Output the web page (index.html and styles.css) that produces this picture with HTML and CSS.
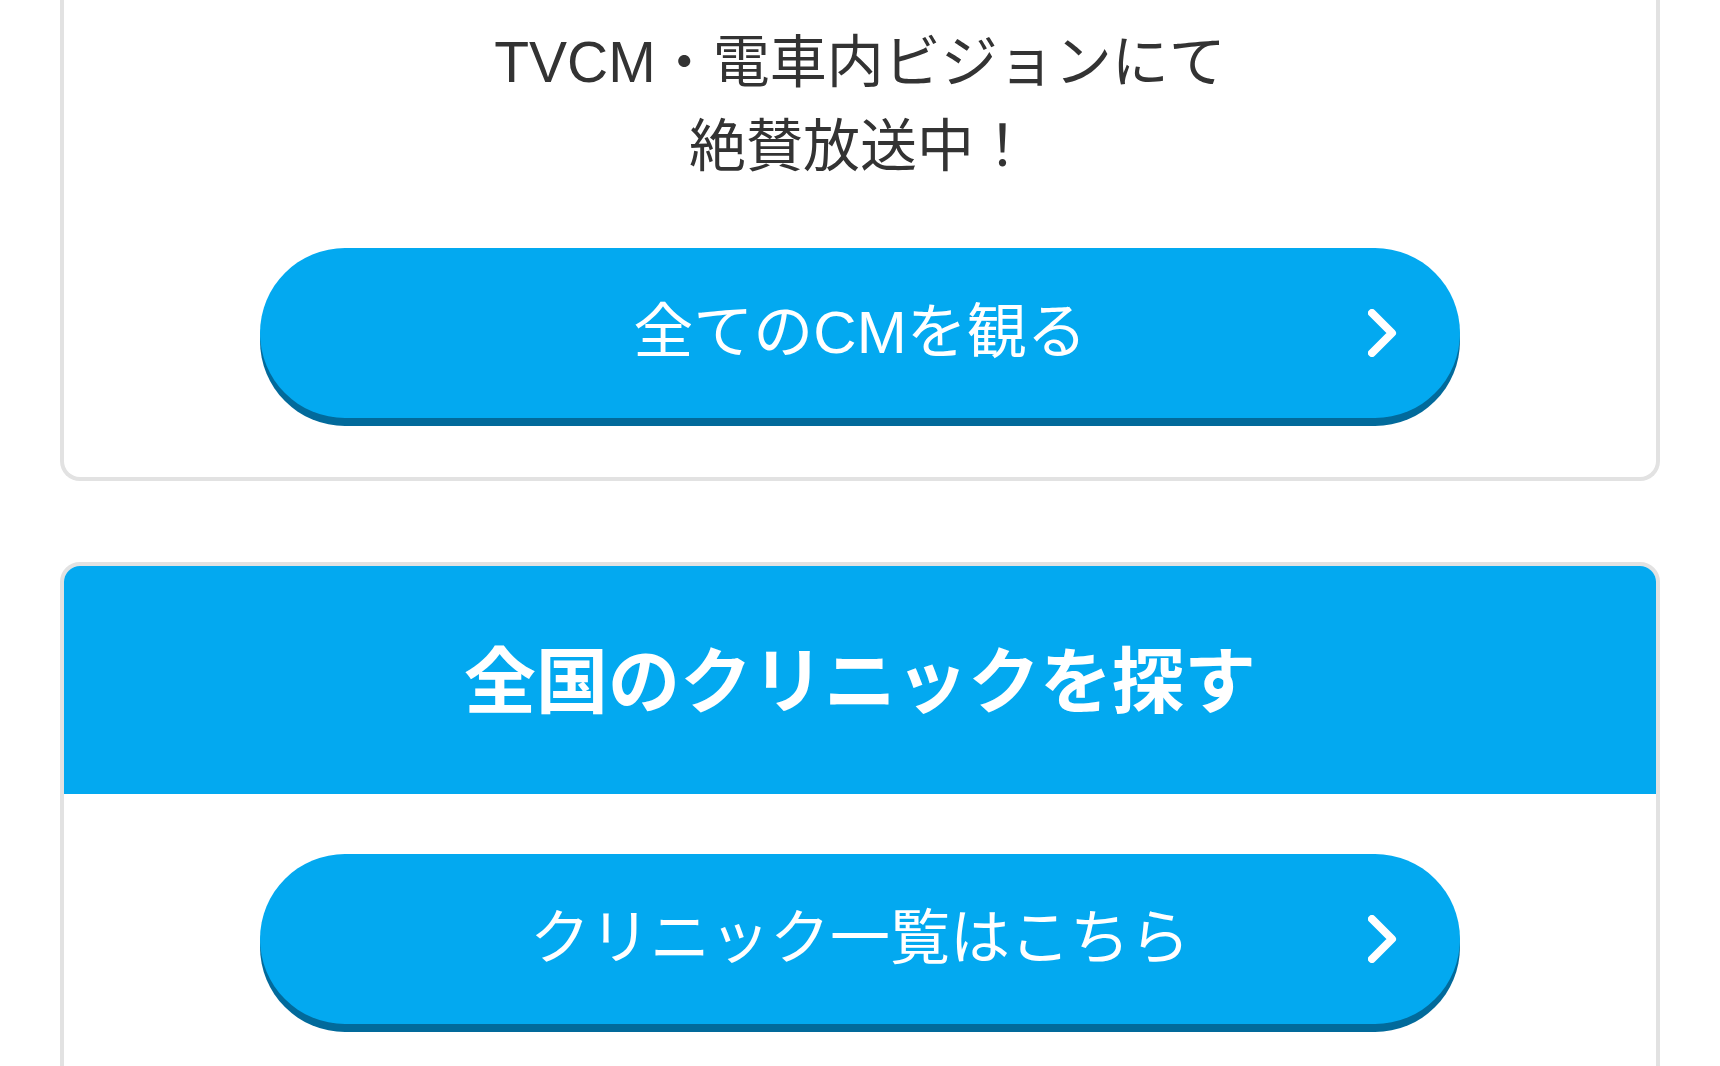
FILE: index.html
```html
<!DOCTYPE html>
<html lang="ja">
<head>
<meta charset="utf-8">
<title>CM・クリニック</title>
<link rel="stylesheet" href="styles.css">
</head>
<body>
<main class="page">
  <section class="card card-cm">
    <p class="cm-lead">TVCM・電車内ビジョンにて<br>絶賛放送中！</p>
    <a class="pill-btn" href="#">
      <span class="pill-label">全てのCMを観る</span>
      <svg class="pill-chevron" width="30" height="48" viewBox="0 0 30 48" aria-hidden="true">
        <path d="M4 4 L24 24 L4 44" fill="none" stroke="#fff" stroke-width="8" stroke-linecap="round" stroke-linejoin="round"/>
      </svg>
    </a>
  </section>

  <section class="card card-clinic">
    <h2 class="card-head">全国のクリニックを探す</h2>
    <div class="card-body">
      <a class="pill-btn" href="#">
        <span class="pill-label">クリニック一覧はこちら</span>
        <svg class="pill-chevron" width="30" height="48" viewBox="0 0 30 48" aria-hidden="true">
          <path d="M4 4 L24 24 L4 44" fill="none" stroke="#fff" stroke-width="8" stroke-linecap="round" stroke-linejoin="round"/>
        </svg>
      </a>
    </div>
  </section>
</main>
</body>
</html>
```

FILE: styles.css
```css
html, body {
  margin: 0;
  padding: 0;
  background: #ffffff;
  overflow: hidden;
}

body {
  font-family: "Liberation Sans", "Noto Sans CJK JP", sans-serif;
  color: #333333;
}

.page {
  padding: 0 60px;
}

.card {
  background: #ffffff;
  border: 4px solid #e2e2e2;
  border-radius: 20px;
  overflow: hidden;
}

.card-cm {
  border-top: 0;
  border-top-left-radius: 0;
  border-top-right-radius: 0;
  padding: 20px 0 59px;
}

.cm-lead {
  margin: 0 0 60px;
  font-size: 57px;
  line-height: 84px;
  text-align: center;
  color: #333333;
}

.pill-btn {
  display: grid;
  grid-template-columns: 1fr auto 1fr;
  align-items: center;
  width: 1200px;
  height: 170px;
  margin: 0 auto;
  padding: 0 62px 0 62px;
  box-sizing: border-box;
  border-radius: 85px;
  background: #03a9f0;
  box-shadow: 0 8px 0 #026a9b;
  color: #ffffff;
  text-decoration: none;
}

.pill-label {
  grid-column: 2;
  font-size: 60px;
  line-height: 1;
  white-space: nowrap;
}

.pill-chevron {
  grid-column: 3;
  justify-self: end;
  display: block;
}

.card-clinic {
  margin-top: 81px;
}

.card-head {
  margin: 0;
  height: 228px;
  box-sizing: border-box;
  padding-bottom: 8px;
  display: flex;
  align-items: center;
  justify-content: center;
  background: #03a9f0;
  color: #ffffff;
  font-family: "Noto Sans CJK JP", sans-serif;
  font-size: 72px;
  font-weight: 700;
  line-height: 1;
}

.card-body {
  padding: 60px 0 59px;
}
```
